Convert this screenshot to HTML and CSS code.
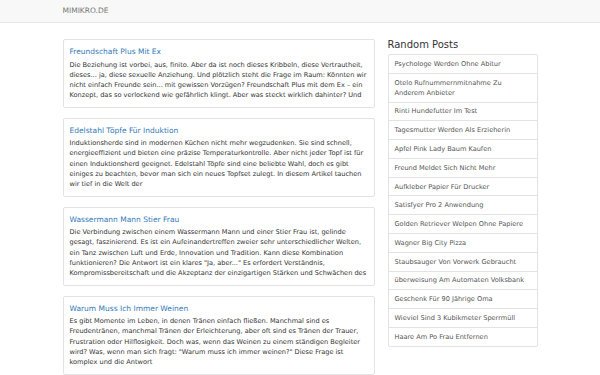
FILE: index.html
```html
<!DOCTYPE html>
<html lang="de">
<head>
    <meta charset="UTF-8">
    <meta name="viewport" content="width=device-width, initial-scale=1.0">
    <title>mimikro.de</title>
    <link rel="stylesheet" href="styles.css">
</head>
<body>
    <nav class="navbar">
        <div class="container">
            <a class="brand" href="#">MIMIKRO.DE</a>
        </div>
    </nav>

    <div class="container content">
        <main class="posts">
            <article class="post">
                <h2><a href="#">Freundschaft Plus Mit Ex</a></h2>
                <p>Die Beziehung ist vorbei, aus, finito. Aber da ist noch dieses Kribbeln, diese Vertrautheit, dieses... ja, diese sexuelle Anziehung. Und plötzlich steht die Frage im Raum: Könnten wir nicht einfach Freunde sein... mit gewissen Vorzügen? Freundschaft Plus mit dem Ex – ein Konzept, das so verlockend wie gefährlich klingt. Aber was steckt wirklich dahinter? Und</p>
            </article>
            <article class="post">
                <h2><a href="#">Edelstahl Töpfe Für Induktion</a></h2>
                <p>Induktionsherde sind in modernen Küchen nicht mehr wegzudenken. Sie sind schnell, energieeffizient und bieten eine präzise Temperaturkontrolle. Aber nicht jeder Topf ist für einen Induktionsherd geeignet. Edelstahl Töpfe sind eine beliebte Wahl, doch es gibt einiges zu beachten, bevor man sich ein neues Topfset zulegt. In diesem Artikel tauchen wir tief in die Welt der</p>
            </article>
            <article class="post">
                <h2><a href="#">Wassermann Mann Stier Frau</a></h2>
                <p>Die Verbindung zwischen einem Wassermann Mann und einer Stier Frau ist, gelinde gesagt, faszinierend. Es ist ein Aufeinandertreffen zweier sehr unterschiedlicher Welten, ein Tanz zwischen Luft und Erde, Innovation und Tradition. Kann diese Kombination funktionieren? Die Antwort ist ein klares "Ja, aber..." Es erfordert Verständnis, Kompromissbereitschaft und die Akzeptanz der einzigartigen Stärken und Schwächen des</p>
            </article>
            <article class="post">
                <h2><a href="#">Warum Muss Ich Immer Weinen</a></h2>
                <p>Es gibt Momente im Leben, in denen Tränen einfach fließen. Manchmal sind es Freudentränen, manchmal Tränen der Erleichterung, aber oft sind es Tränen der Trauer, Frustration oder Hilflosigkeit. Doch was, wenn das Weinen zu einem ständigen Begleiter wird? Was, wenn man sich fragt: "Warum muss ich immer weinen?" Diese Frage ist komplex und die Antwort</p>
            </article>
        </main>

        <aside class="sidebar">
            <h3>Random Posts</h3>
            <ul class="list">
                <li><a href="#">Psychologe Werden Ohne Abitur</a></li>
                <li><a href="#">Otelo Rufnummernmitnahme Zu Anderem Anbieter</a></li>
                <li><a href="#">Rinti Hundefutter Im Test</a></li>
                <li><a href="#">Tagesmutter Werden Als Erzieherin</a></li>
                <li><a href="#">Apfel Pink Lady Baum Kaufen</a></li>
                <li><a href="#">Freund Meldet Sich Nicht Mehr</a></li>
                <li><a href="#">Aufkleber Papier Für Drucker</a></li>
                <li><a href="#">Satisfyer Pro 2 Anwendung</a></li>
                <li><a href="#">Golden Retriever Welpen Ohne Papiere</a></li>
                <li><a href="#">Wagner Big City Pizza</a></li>
                <li><a href="#">Staubsauger Von Vorwerk Gebraucht</a></li>
                <li><a href="#">überweisung Am Automaten Volksbank</a></li>
                <li><a href="#">Geschenk Für 90 Jährige Oma</a></li>
                <li><a href="#">Wieviel Sind 3 Kubikmeter Sperrmüll</a></li>
                <li><a href="#">Haare Am Po Frau Entfernen</a></li>
            </ul>
        </aside>
    </div>
</body>
</html>
```

FILE: styles.css
```css
body {
    margin: 0;
    font-family: "DejaVu Sans", Verdana, sans-serif;
    font-size: 6.6px;
    line-height: 10.3px;
    color: #333;
    background-color: #fff;
}
a {
    text-decoration: none;
}
.container {
    width: 475px;
    margin: 0 auto;
}
.navbar {
    height: 22px;
    background-color: #f8f8f8;
    border-bottom: 1px solid #e7e7e7;
}
.navbar .container {
    display: flex;
    align-items: center;
    height: 100%;
}
.brand {
    color: #777;
    font-size: 7.5px;
}
.content {
    display: flex;
    gap: 13px;
    padding-top: 16px;
}
.posts {
    width: 312px;
    display: flex;
    flex-direction: column;
    gap: 10px;
}
.post {
    border: 1px solid #e3e3e3;
    border-radius: 2px;
    padding: 7px 6px 6px;
}
.post h2 {
    margin: 0 0 2.5px;
    font-size: 7.5px;
    font-weight: normal;
    line-height: 10px;
}
.post h2 a {
    color: #337ab7;
}
.post p {
    margin: 0;
}
.sidebar {
    width: 150px;
}
.sidebar h3 {
    margin: 0 0 3px;
    font-size: 10px;
    font-weight: normal;
    line-height: 12px;
    color: #333;
}
.list {
    list-style: none;
    margin: 0;
    padding: 0;
    border: 1px solid #e3e3e3;
    border-radius: 2px;
}
.list li {
    padding: 3.9px 6px;
    border-top: 1px solid #e3e3e3;
    line-height: 10px;
}
.list li:first-child {
    border-top: 0;
}
.list a {
    color: #555;
}
```
